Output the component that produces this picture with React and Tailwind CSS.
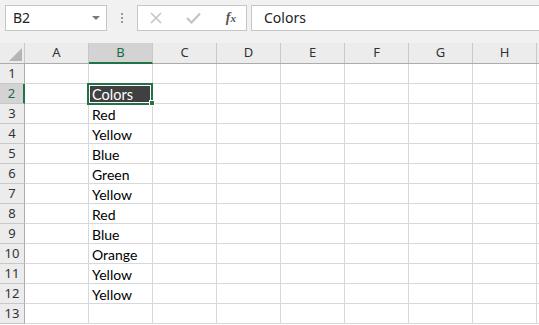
const cols = ['A', 'B', 'C', 'D', 'E', 'F', 'G', 'H'];
const values = {
  2: 'Colors',
  3: 'Red',
  4: 'Yellow',
  5: 'Blue',
  6: 'Green',
  7: 'Yellow',
  8: 'Red',
  9: 'Blue',
  10: 'Orange',
  11: 'Yellow',
  12: 'Yellow',
};
const rows = Array.from({ length: 13 }, (_, i) => i + 1);

const FormulaBar = () => (
  <div className="flex items-center h-[43px] pb-[8px] pl-[5px] bg-[#f1f1f1]">
    {/* Name box */}
    <div className="flex items-center justify-between w-[102px] h-[26px] bg-white border border-[#c6c6c6] pl-[7px] pr-[5px]">
      <span className="text-[14px] text-[#222]">B2</span>
      <svg width="10" height="6" viewBox="0 0 10 6">
        <path d="M1 1 L9 1 L5 5 Z" fill="#7a7a7a" />
      </svg>
    </div>

    {/* Grip */}
    <div className="flex flex-col gap-[2px] w-[30px] items-center">
      <span className="w-[2px] h-[2px] bg-[#9a9a9a]" />
      <span className="w-[2px] h-[2px] bg-[#9a9a9a]" />
      <span className="w-[2px] h-[2px] bg-[#9a9a9a]" />
    </div>

    {/* Cancel / Enter / fx */}
    <div className="flex items-center justify-between w-[110px] h-[26px] bg-white border border-[#c6c6c6] pl-[12px] pr-[10px]">
      <svg width="12" height="12" viewBox="0 0 12 12">
        <path d="M1 1 L11 11 M11 1 L1 11" stroke="#c4c4c4" strokeWidth="1.6" />
      </svg>
      <svg width="15" height="12" viewBox="0 0 15 12">
        <path d="M1 6 L5.5 10.5 L14 1.5" stroke="#c4c4c4" strokeWidth="2.2" fill="none" />
      </svg>
      <span className="text-[14px] italic font-bold text-[#555] font-['Liberation_Serif',serif] leading-none">
        f<span className="text-[11px]">x</span>
      </span>
    </div>

    {/* Formula input */}
    <div className="flex items-center flex-1 h-[26px] ml-[4px] bg-white border border-[#c6c6c6] border-r-0 pl-[12px]">
      <span className="text-[14px] text-[#222]">Colors</span>
    </div>
  </div>
);

const ColumnHeaders = () => (
  <div className="flex h-[21px] bg-[#ececec] border-b border-[#ababab]">
    <div className="relative w-[25px] shrink-0 border-r border-[#c8c8c8]">
      <svg className="absolute left-[9px] top-[5px]" width="13" height="13" viewBox="0 0 13 13">
        <path d="M13 0 L13 13 L0 13 Z" fill="#b5b5b5" />
      </svg>
    </div>
    {cols.map((c) => (
      <div
        key={c}
        className={
          c === 'B'
            ? 'w-[64px] shrink-0 flex items-center justify-center text-[13px] text-[#1e6b41] bg-[#d3d3d3] border-r border-[#c8c8c8] border-b-2 border-b-[#217346] -mb-px'
            : 'w-[64px] shrink-0 flex items-center justify-center text-[13px] text-[#333] border-r border-[#c8c8c8]'
        }
      >
        {c}
      </div>
    ))}
    <div className="flex-1" />
  </div>
);

const Row = ({ n }) => {
  const selected = n === 2;
  return (
    <div className="flex h-[20px]">
      <div
        className={
          selected
            ? 'w-[25px] shrink-0 flex items-center justify-center text-[13px] text-[#1e6b41] bg-[#d3d3d3] border-b border-[#c8c8c8] border-r-2 border-r-[#217346]'
            : 'w-[25px] shrink-0 flex items-center justify-center text-[13px] text-[#333] bg-[#ececec] border-b border-[#c8c8c8] border-r border-r-[#ababab]'
        }
      >
        {n}
      </div>
      {cols.map((c) => {
        if (c === 'B' && selected) {
          return (
            <div
              key={c}
              className="relative w-[64px] shrink-0 border-r border-b border-[#d8d8d8]"
            >
              <div className="absolute -left-[2px] -top-[1px] w-[66px] h-[22px] border-2 border-[#217346] bg-white p-px">
                <div className="h-full bg-[#404040] text-white text-[14.5px] leading-[18px] pl-[2px] font-['Lato',sans-serif]">
                  {values[n]}
                </div>
              </div>
              <div className="absolute -right-[3px] -bottom-[3px] w-[6px] h-[6px] bg-[#217346] border border-white" />
            </div>
          );
        }
        return (
          <div
            key={c}
            className="w-[64px] shrink-0 border-r border-b border-[#d8d8d8] text-[14px] leading-[19px] pt-px pl-[3px] text-black font-['Lato',sans-serif]"
          >
            {c === 'B' ? values[n] : ''}
          </div>
        );
      })}
      <div className="flex-1 border-b border-[#d8d8d8]" />
    </div>
  );
};

export default function App() {
  return (
    <div className="w-[539px] h-[325px] overflow-hidden bg-white font-['Noto_Sans',sans-serif]">
      <FormulaBar />
      <ColumnHeaders />
      {rows.map((n) => (
        <Row key={n} n={n} />
      ))}
    </div>
  );
}
